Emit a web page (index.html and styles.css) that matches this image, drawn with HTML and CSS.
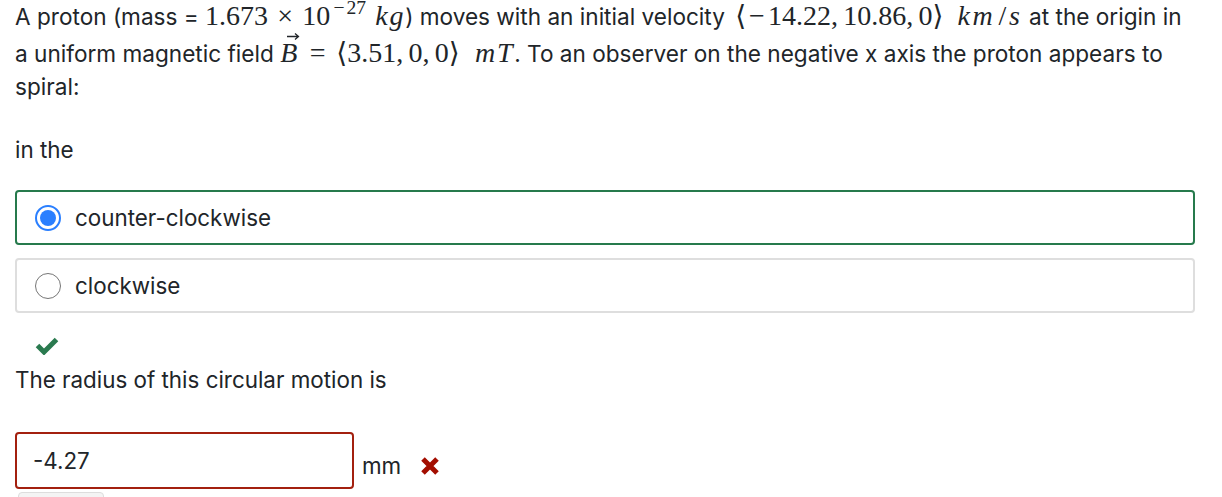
FILE: index.html
```html
<!DOCTYPE html>
<html>
<head>
<meta charset="utf-8">
<link rel="stylesheet" href="styles.css">
</head>
<body>
<div class="q">
  <p class="stem">A proton (mass = <span class="m">1.673<span class="bin">×</span>10<span class="sup"><span class="sm">−</span>27</span><i class="unit-kg">kg</i></span>) moves with an initial velocity <span class="m vel"><span class="br">⟨</span><span class="neg">−</span>14.22<span class="c">,</span>10.86<span class="c">,</span>0<span class="br">⟩</span><i class="u kms">km</i><span class="sl">/</span><i class="kms">s</i></span> at the origin in a uniform magnetic field <span class="m"><span class="vec"><i>B</i><svg class="arrow" width="14" height="8" viewBox="0 0 14 8"><path d="M1 4.5 H12.5 M9 1.5 L12.5 4.5 L9 7.5" fill="none" stroke="#212529" stroke-width="1.3"/></svg></span><span class="rel">=</span><span class="br">⟨</span>3.51<span class="c">,</span>0<span class="c">,</span>0<span class="br">⟩</span><i class="u mt">mT</i></span>. To an observer on the negative x axis the proton appears to spiral:</p>
  <p class="lead">in the</p>
  <div class="choices">
    <label class="choice selected"><span class="radio on"></span><span>counter-clockwise</span></label>
    <label class="choice"><span class="radio"></span><span>clockwise</span></label>
  </div>
  <div class="feedback">
    <svg class="check" width="24" height="19" viewBox="0 0 24 19"><path d="M2.5 9.5 L9 16 L21.5 3.5" fill="none" stroke="#2a7a4f" stroke-width="5"/></svg>
  </div>
  <p class="lead2">The radius of this circular motion is</p>
  <div class="answer">
    <div class="input">-4.27</div>
    <span class="unit">mm</span>
    <svg class="cross" width="20" height="20" viewBox="0 0 20 20"><path d="M3 3 L17 17 M17 3 L3 17" stroke="#a30d00" stroke-width="5"/></svg>
  </div>
  <div class="btn"></div>
</div>
</body>
</html>
```
FILE: styles.css
```css
html, body { margin: 0; padding: 0; background: #fff; }
body {
  font-family: Inter, "Noto Sans", sans-serif;
  font-size: 22.4px;
  color: #212529;
  overflow: hidden;
}
.q { padding: 0 27px 0 15px; }
.stem { margin: 0 6px 0 0; line-height: 33px; font-size: 22.6px; }
.m {
  font-family: "Liberation Serif", "DejaVu Serif", serif;
  font-size: 28px;
  white-space: nowrap;
  line-height: 1;
}
.m i { font-style: italic; letter-spacing: 0.06em; }
.m i.kms { letter-spacing: 0.1em; }
.vel { margin-left: 4px; }
.bin { display: inline-block; width: 0.778em; margin: 0 0.222em; text-align: center; }
.rel { display: inline-block; width: 0.778em; margin: 0 0.278em; text-align: center; }
.neg { display: inline-block; width: 0.778em; text-align: center; }
.br { display: inline-block; width: 0.389em; text-align: center; }
.c { margin-right: 0.19em; }
.sl { margin: 0 0.1em; }
.u { margin-left: 0.4em; }
.u.kms { margin-left: 0.5em; }
.u.mt { margin-left: 0.55em; }
.unit-kg { margin-left: 0.33em; }
.sup { font-size: 19.6px; line-height: 0; position: relative; top: -11px; margin-left: 1px; }
.sm { display: inline-block; width: 0.778em; text-align: center; line-height: 0; }
.vec { position: relative; display: inline-block; padding-top: 6px; }
.arrow { position: absolute; left: 6px; top: -1px; }
.lead { margin: 30px 0 0; line-height: 33px; }
.choices { margin-top: 24px; display: flex; flex-direction: column; gap: 13px; }
.choice {
  display: flex; align-items: center; gap: 14px;
  height: 55px; box-sizing: border-box; padding: 0 18px;
  border: 2px solid #dedede; border-radius: 4px;
}
.choice.selected { border-color: #267a4c; }
.radio {
  width: 26px; height: 26px; border-radius: 50%;
  border: 1.5px solid #767676; box-sizing: border-box; flex: none;
}
.radio.on { border: 2px solid #2a7fff; position: relative; }
.radio.on::after {
  content: ""; position: absolute; left: 3px; top: 3px; width: 16px; height: 16px;
  border-radius: 50%; background: #2a7fff;
}
.feedback { margin-top: 23px; padding-left: 20px; height: 19px; }
.check { display: block; }
.lead2 { margin: 8px 0 0; line-height: 33px; }
.answer { margin-top: 36px; display: flex; align-items: center; }
.input {
  width: 339px; height: 57px; box-sizing: border-box;
  border: 2px solid #a3200f; border-radius: 4px;
  padding: 0 16px; display: flex; align-items: center;
  font-size: 22.4px;
}
.unit { margin-left: 8px; margin-top: 10px; }
.cross { margin-left: 19px; margin-top: 10px; }
.btn { margin: 3px 0 0 3px; width: 84px; height: 10px; border: 1px solid #ddd; border-radius: 4px; background: #f4f4f4; }
```
